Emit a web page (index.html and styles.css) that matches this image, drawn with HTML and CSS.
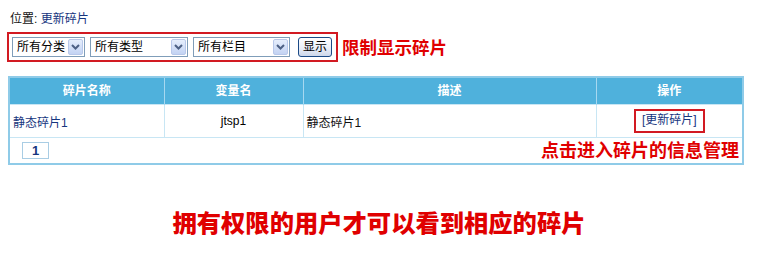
FILE: index.html
```html
<!DOCTYPE html>
<html lang="zh-CN">
<head>
<meta charset="utf-8">
<title>更新碎片</title>
<link rel="stylesheet" href="styles.css">
</head>
<body>
<div class="page">
  <div class="loc">位置: <a class="loc-link">更新碎片</a></div>

  <div class="filter-row">
    <div class="filter-box">
      <span class="sel w1"><span class="sel-text">所有分类</span><span class="sel-btn"><svg width="9" height="6" viewBox="0 0 9 6"><path d="M1 1 L4.5 4.5 L8 1" fill="none" stroke="#4d6185" stroke-width="2"/></svg></span></span>
      <span class="sel w2"><span class="sel-text">所有类型</span><span class="sel-btn"><svg width="9" height="6" viewBox="0 0 9 6"><path d="M1 1 L4.5 4.5 L8 1" fill="none" stroke="#4d6185" stroke-width="2"/></svg></span></span>
      <span class="sel w3"><span class="sel-text">所有栏目</span><span class="sel-btn"><svg width="9" height="6" viewBox="0 0 9 6"><path d="M1 1 L4.5 4.5 L8 1" fill="none" stroke="#4d6185" stroke-width="2"/></svg></span></span>
      <span class="btn">显示</span>
    </div>
    <span class="note note-filter">限制显示碎片</span>
  </div>

  <table class="grid">
    <colgroup>
      <col class="c1"><col class="c2"><col class="c3"><col class="c4">
    </colgroup>
    <thead>
      <tr><th>碎片名称</th><th>变量名</th><th>描述</th><th>操作</th></tr>
    </thead>
    <tbody>
      <tr class="data">
        <td class="left"><a class="link">静态碎片1</a></td>
        <td class="center">jtsp1</td>
        <td class="left desc">静态碎片1</td>
        <td class="center"><span class="op">[更新碎片]</span></td>
      </tr>
      <tr class="pager">
        <td colspan="4">
          <div class="pager-inner">
            <span class="page-no">1</span>
            <span class="note note-op">点击进入碎片的信息管理</span>
          </div>
        </td>
      </tr>
    </tbody>
  </table>

  <div class="big-note">拥有权限的用户才可以看到相应的碎片</div>
</div>
</body>
</html>
```

FILE: styles.css
```css
html, body {
  margin: 0;
  padding: 0;
  background: #fff;
}
body {
  font-family: "Liberation Sans", "Noto Sans CJK SC", sans-serif;
  font-size: 12px;
  color: #000;
}
.page {
  width: 735px;
  margin-left: 8px;
}
.loc {
  padding-top: 12px;
  padding-left: 2px;
  line-height: 14px;
  height: 14px;
  color: #111;
}
.loc-link {
  color: #16357e;
}
.filter-row {
  margin-top: 6px;
  display: flex;
  align-items: center;
  margin-left: -1px;
}
.filter-box {
  display: flex;
  align-items: center;
  border: 2px solid #d21a22;
  padding: 3px 4px 3px 3px;
  height: 20px;
}
.sel {
  display: flex;
  align-items: center;
  box-sizing: border-box;
  height: 20px;
  border: 1px solid #7f9db9;
  background: #fff;
  padding: 1px;
  margin-right: 5px;
}
.w1 { width: 73px; }
.w2 { width: 98px; }
.w3 { width: 97px; margin-right: 8px; }
.sel-text {
  padding-left: 3px;
  line-height: 16px;
  color: #000;
}
.sel-btn {
  margin-left: auto;
  box-sizing: border-box;
  width: 15px;
  height: 16px;
  border: 1px solid #b8c8ea;
  border-radius: 2px;
  background: linear-gradient(#e6eefc, #c3d3f3);
  display: flex;
  align-items: center;
  justify-content: center;
}
.btn {
  box-sizing: border-box;
  width: 34px;
  height: 20px;
  border: 1px solid #1b4a86;
  border-radius: 3px;
  background: linear-gradient(#ffffff, #e7ecf6 60%, #cdd7ea);
  text-align: center;
  line-height: 18px;
  color: #000;
}
.note {
  color: #e00000;
  font-weight: bold;
  font-family: "Noto Sans CJK SC", sans-serif;
}
.note-filter {
  margin-left: 4px;
  font-size: 17.5px;
  line-height: 22px;
}
.grid {
  margin-top: 14px;
  width: 735px;
  border-collapse: collapse;
  border: 2px solid #8fcbe8;
  table-layout: fixed;
}
.c1 { width: 155px; }
.c2 { width: 139px; }
.c3 { width: 293px; }
.c4 { width: 147px; }
.grid th {
  background: #4fb1dc;
  color: #fff;
  font-weight: bold;
  height: 26px;
  padding: 0;
  border-left: 1px solid #a6d8f0;
  text-align: center;
  line-height: 14px;
}
.grid th:first-child { border-left: none; }
.grid td {
  padding: 0;
  border: 1px solid #c8e6f4;
}
.data td {
  height: 32px;
}
.left { text-align: left; padding-left: 3px !important; }
.center { text-align: center; }
.link { color: #16357e; }
.desc { color: #111; }
.op {
  display: inline-block;
  border: 2px solid #d21a22;
  padding: 2px 6px 3px;
  line-height: 15px;
  color: #16357e;
}
.pager td {
  height: 25px;
}
.pager-inner {
  display: flex;
  align-items: center;
  justify-content: space-between;
  padding-left: 12px;
  padding-right: 3px;
}
.page-no {
  box-sizing: border-box;
  width: 27px;
  height: 17px;
  border: 1px solid #a9cde4;
  text-align: center;
  line-height: 15px;
  font-weight: bold;
  font-size: 13px;
  color: #16357e;
}
.note-op {
  font-size: 18px;
  line-height: 22px;
  margin-top: -3px;
}
.big-note {
  margin-top: 42px;
  width: 758px;
  margin-left: -8px;
  text-align: center;
  color: #e00000;
  font-weight: 900;
  font-family: "Noto Sans CJK SC", sans-serif;
  font-size: 24.3px;
  line-height: 30px;
}
```
